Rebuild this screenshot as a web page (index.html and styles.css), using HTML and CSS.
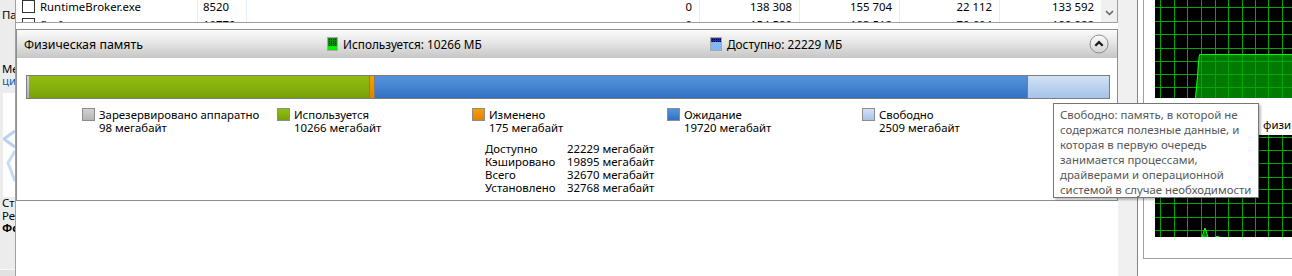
FILE: index.html
```html
<!DOCTYPE html>
<html lang="ru">
<head>
<meta charset="utf-8">
<title>Физическая память</title>
<link rel="stylesheet" href="styles.css">
</head>
<body>
<div class="screen">
  <aside class="side">
    <div class="side-top">Па</div>
    <div class="side-mid">
      <div>Ме</div>
      <div class="link">ци</div>
    </div>
    <div class="side-pic">
      <svg width="12" height="104" viewBox="0 0 12 104">
        <path d="M12 38 L1 46 L12 54" fill="none" stroke="#b9d2ef" stroke-width="3"/>
        <path d="M12 58 L5 70 L12 88" fill="none" stroke="#c7dbf2" stroke-width="3"/>
      </svg>
    </div>
    <div class="side-bot">
      <div>Ст</div>
      <div>Ре</div>
      <div class="bold">Фо</div>
    </div>
    <div class="side-foot"></div>
  </aside>

  <main class="main">
    <div class="table">
      <div class="rows">
        <div class="row">
          <div class="cell name"><span class="check"></span>RuntimeBroker.exe</div>
          <div class="cell pid">8520</div>
          <div class="cell num">0</div>
          <div class="cell num">138 308</div>
          <div class="cell num">155 704</div>
          <div class="cell num">22 112</div>
          <div class="cell num last">133 592</div>
        </div>
        <div class="row">
          <div class="cell name"><span class="check"></span>firefox.exe</div>
          <div class="cell pid">10772</div>
          <div class="cell num">0</div>
          <div class="cell num">154 580</div>
          <div class="cell num">183 512</div>
          <div class="cell num">72 604</div>
          <div class="cell num last">199 988</div>
        </div>
      </div>
      <div class="vscroll">
        <svg width="9" height="6" viewBox="0 0 9 6"><path d="M1 1 L4.5 4.5 L8 1" fill="none" stroke="#606060" stroke-width="1.5"/></svg>
      </div>
    </div>

    <section class="panel">
      <header class="panel-head">
        <div class="head-title">Физическая память</div>
        <div class="head-leg leg-used">
          <svg width="11" height="14" viewBox="0 0 11 14">
            <defs>
              <pattern id="gdots" width="2" height="2" patternUnits="userSpaceOnUse">
                <rect width="2" height="2" fill="#0f8a0f"/>
                <rect width="1" height="1" fill="#003300"/>
              </pattern>
            </defs>
            <rect x="0.5" y="0.5" width="10" height="13" fill="#ffffff" stroke="#a8a8a8"/>
            <rect x="1" y="1" width="9" height="8" fill="url(#gdots)"/>
            <rect x="1" y="9" width="9" height="4" fill="#00f000"/>
          </svg>
          <span>Используется: 10266 МБ</span>
        </div>
        <div class="head-leg leg-avail">
          <svg width="12" height="14" viewBox="0 0 12 14">
            <defs>
              <pattern id="bdots" width="2" height="2" patternUnits="userSpaceOnUse">
                <rect width="2" height="2" fill="#1a2fa8"/>
                <rect width="1" height="1" fill="#000040"/>
              </pattern>
            </defs>
            <rect x="0.5" y="0.5" width="11" height="13" fill="#ffffff" stroke="#a8a8a8"/>
            <rect x="1" y="1" width="10" height="4" fill="url(#bdots)"/>
            <rect x="1" y="5" width="10" height="8" fill="#7fb6f8"/>
          </svg>
          <span>Доступно: 22229 МБ</span>
        </div>
        <button class="collapse" type="button" aria-label="Свернуть">
          <svg width="20" height="20" viewBox="0 0 20 20">
            <defs>
              <linearGradient id="btng" x1="0" y1="0" x2="0" y2="1">
                <stop offset="0" stop-color="#fdfdfd"/>
                <stop offset="1" stop-color="#d2d2d2"/>
              </linearGradient>
            </defs>
            <circle cx="10" cy="10" r="9" fill="url(#btng)" stroke="#8c8c8c"/>
            <path d="M6.3 11.8 L10 8.1 L13.7 11.8" fill="none" stroke="#1c1c1c" stroke-width="2.2"/>
          </svg>
        </button>
      </header>

      <div class="panel-body">
        <div class="bar">
          <div class="seg seg-res" style="width:2px"></div>
          <div class="seg seg-used" style="width:340px"></div>
          <div class="seg seg-mod sep" style="width:5px"></div>
          <div class="seg seg-stby sep" style="width:653px"></div>
          <div class="seg seg-free sep" style="width:82px"></div>
        </div>

        <div class="legend">
          <div class="leg-item"><span class="sw sw-res"></span><div><div>Зарезервировано аппаратно</div><div>98 мегабайт</div></div></div>
          <div class="leg-item"><span class="sw sw-used"></span><div><div>Используется</div><div>10266 мегабайт</div></div></div>
          <div class="leg-item"><span class="sw sw-mod"></span><div><div>Изменено</div><div>175 мегабайт</div></div></div>
          <div class="leg-item"><span class="sw sw-stby"></span><div><div>Ожидание</div><div>19720 мегабайт</div></div></div>
          <div class="leg-item"><span class="sw sw-free"></span><div><div>Свободно</div><div>2509 мегабайт</div></div></div>
        </div>

        <div class="stats">
          <div>Доступно</div><div>22229 мегабайт</div>
          <div>Кэшировано</div><div>19895 мегабайт</div>
          <div>Всего</div><div>32670 мегабайт</div>
          <div>Установлено</div><div>32768 мегабайт</div>
        </div>
      </div>
    </section>
  </main>

  <div class="splitter"></div>

  <aside class="graphs">
    <div class="group">
      <div class="graph graph-top">
        <svg width="137" height="98" viewBox="0 0 137 98">
          <rect width="137" height="98" fill="#000"/>
          <path d="M40 98 L42 77 L43 62 L44.5 54.5 L137 54.5 L137 98 Z" fill="#007a00"/>
          <g stroke="#00a800" stroke-width="1">
            <path d="M5.5 0V98M19.5 0V98M32.5 0V98M46.5 0V98M60.5 0V98M73.5 0V98M87.5 0V98M100.5 0V98M113.5 0V98M127.5 0V98"/>
            <path d="M0 7.5H137M0 21.5H137M0 34.5H137M0 48.5H137M0 61.5H137M0 74.5H137M0 87.5H137"/>
          </g>
          <path d="M40.5 98 L42.5 77 L43.5 62 L44.5 54.5 L137 54.5" fill="none" stroke="#00ff00" stroke-width="1"/>
        </svg>
      </div>
      <div class="graph-label">физи</div>
      <div class="graph graph-bot">
        <svg width="137" height="102" viewBox="0 0 137 102">
          <rect width="137" height="102" fill="#000"/>
          <g stroke="#00a800" stroke-width="1">
            <path d="M5.5 0V102M19.5 0V102M32.5 0V102M46.5 0V102M60.5 0V102M73.5 0V102M87.5 0V102M100.5 0V102M113.5 0V102M127.5 0V102"/>
            <path d="M0 2.5H137M0 15.5H137M0 28.5H137M0 42.5H137M0 54.5H137M0 68.5H137M0 82.5H137M0 95.5H137"/>
          </g>
          <path d="M47 102 L50 93 L53 102 Z" fill="#007a00" stroke="#00ff00" stroke-width="1"/>
          <path d="M61 101.5 H64" stroke="#00ff00" stroke-width="1"/>
        </svg>
      </div>
    </div>
  </aside>

  <div class="tooltip">
    Свободно: память, в которой не<br>
    содержатся полезные данные, и<br>
    которая в первую очередь<br>
    занимается процессами,<br>
    драйверами и операционной<br>
    системой в случае необходимости
  </div>
</div>
</body>
</html>
```

FILE: styles.css
```css
* {
  box-sizing: border-box;
  margin: 0;
  padding: 0;
}

html, body {
  width: 1292px;
  height: 276px;
  overflow: hidden;
  background: #ffffff;
}

body {
  font-family: "Noto Sans", "Open Sans", sans-serif;
  font-size: 11.4px;
  line-height: 13px;
  color: #000000;
}

.screen {
  position: relative;
  display: flex;
  width: 1292px;
  height: 276px;
}

/* left partial pane */
.side {
  flex: none;
  width: 16px;
  height: 276px;
  background: #ececec;
  border-right: 1px solid #a0a0a0;
  overflow: hidden;
  white-space: nowrap;
  display: flex;
  flex-direction: column;
}

.side-top {
  padding: 8px 0 0 2px;
  height: 63px;
}

.side-mid {
  padding-left: 2px;
  line-height: 12px;
  height: 30px;
}

.side-mid .link {
  color: #0a5fb4;
}

.side-pic {
  margin-left: 3px;
  height: 104px;
  background: #ffffff;
  overflow: hidden;
}

.side-pic svg {
  display: block;
}

.side-bot {
  padding-left: 2px;
  line-height: 12.5px;
  height: 72px;
}

.side-bot .bold {
  font-weight: 700;
}

.side-foot {
  flex: 1;
  border-top: 1px solid #f8f8f8;
  background: #e2e2e2;
}

/* main column */
.main {
  flex: none;
  width: 1102px;
  display: flex;
  flex-direction: column;
  background: #ffffff;
}

.table {
  display: flex;
  height: 23px;
  border-bottom: 1px solid #a0a0a0;
  border-right: 1px solid #a0a0a0;
  overflow: hidden;
}

.rows {
  width: 1085px;
  margin-top: -3px;
}

.row {
  display: grid;
  grid-template-columns: 182px 49px 453px 100px 100px 100px 101px;
  height: 18px;
  align-items: stretch;
}

.cell {
  display: flex;
  align-items: center;
  border-right: 1px solid #e6eef9;
  white-space: nowrap;
  overflow: hidden;
}

.cell.last {
  border-right: none;
}

.name {
  padding-left: 6px;
}

.check {
  width: 13px;
  height: 13px;
  border: 1px solid #333333;
  background: #ffffff;
  margin-right: 5px;
  flex: none;
}

.pid {
  padding-left: 5px;
}

.num {
  justify-content: flex-end;
  padding-right: 7px;
}

.vscroll {
  width: 16px;
  background: #f0f0f0;
  display: flex;
  justify-content: center;
  padding-top: 10px;
}

.vscroll svg {
  display: block;
}

/* panel */
.panel {
  margin-top: 6px;
  height: 172px;
  border: 1px solid #8e8f8f;
  display: flex;
  flex-direction: column;
}

.panel-head {
  height: 28px;
  display: flex;
  align-items: center;
  background: linear-gradient(#fbfbfb, #e6e6e6 45%, #c6c6c6);
}

.head-title {
  flex: none;
  width: 310px;
  padding-left: 7px;
  font-size: 12.4px;
}

.head-leg {
  display: flex;
  align-items: center;
  gap: 5px;
  font-size: 11.8px;
}

.head-leg svg {
  display: block;
  flex: none;
}

.leg-used {
  flex: none;
  width: 383px;
}

.leg-avail {
  flex: 1;
}

.collapse {
  flex: none;
  width: 20px;
  height: 20px;
  margin-right: 8px;
  border: none;
  background: none;
  display: block;
}

.collapse svg {
  display: block;
}

.panel-body {
  flex: 1;
  padding: 17px 7px 0 9px;
}

.bar {
  display: flex;
  height: 24px;
  border: 1px solid #7d7d7d;
}

.seg {
  flex: none;
  height: 100%;
}

.seg.sep {
  border-left: 1px solid #7d7d7d;
}

.seg-res, .sw-res {
  background: linear-gradient(#d2d2d2, #b4b4b4);
}

.seg-used, .sw-used {
  background: linear-gradient(#91bc10, #86b10c 50%, #76a00a);
}

.seg-mod, .sw-mod {
  background: linear-gradient(#f7a000, #ee8f00 50%, #e38300);
}

.seg-stby, .sw-stby {
  background: linear-gradient(#5392da, #4584d0 50%, #3370c2);
}

.seg-free, .sw-free {
  background: linear-gradient(#d2e2f5, #bcd2ef 50%, #a6c3ea);
}

.legend {
  display: flex;
  margin-top: 9px;
  padding-left: 56px;
}

.leg-item {
  flex: none;
  width: 195px;
  display: flex;
  align-items: flex-start;
  white-space: nowrap;
}

.sw {
  flex: none;
  width: 13px;
  height: 13px;
  border: 1px solid #8d8d8d;
  margin-right: 4px;
}

.stats {
  display: grid;
  grid-template-columns: 82px auto;
  justify-content: start;
  margin-top: 8px;
  padding-left: 459px;
  white-space: nowrap;
}

/* splitter */
.splitter {
  flex: none;
  width: 20px;
  background: #f0f0f0;
  border-right: 1px solid #828282;
}

/* graphs */
.graphs {
  flex: none;
  width: 154px;
  padding-left: 5px;
  background: #ffffff;
}

.group {
  height: 259px;
  border-left: 1px solid #a0a0a0;
  border-bottom: 1px solid #a0a0a0;
  padding-left: 11px;
  overflow: hidden;
}

.graph svg {
  display: block;
}

.graph-top {
  height: 98px;
}

.graph-label {
  height: 37px;
  padding: 20px 0 0 108px;
  white-space: nowrap;
  overflow: hidden;
}

.graph-bot {
  height: 102px;
}

/* tooltip */
.tooltip {
  position: absolute;
  left: 1053px;
  top: 103px;
  width: 206px;
  height: 95px;
  padding: 3px 0 0 6px;
  background: #ffffff;
  border: 1px solid #767676;
  color: #575757;
  line-height: 15px;
  white-space: nowrap;
  box-shadow: 2px 2px 2px rgba(0, 0, 0, 0.25);
}
```
